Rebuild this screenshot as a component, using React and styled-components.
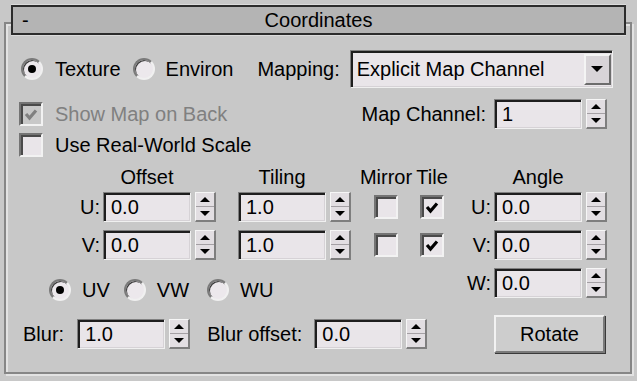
import React from "react";
import styled, { createGlobalStyle } from "styled-components";

const Global = createGlobalStyle`
  html, body { margin: 0; padding: 0; background: #c8c8c8; }
`;

const Root = styled.div`
  width: 637px;
  height: 381px;
  box-sizing: border-box;
  padding: 22px 5px 0 4px;
  background: #c8c8c8;
  font-family: "Liberation Sans", Arial, sans-serif;
  font-size: 20px;
  line-height: 23px;
  color: #000;
  overflow: hidden;
`;

const Frame = styled.div`
  height: 352px;
  box-sizing: border-box;
  border: 2px solid #868686;
  box-shadow: inset 2px 2px 0 #e2e2e2, 2px 2px 0 #e2e2e2;
  display: flex;
  flex-direction: column;
`;

const Header = styled.div`
  margin: -19px 4px 0 5px;
  height: 30px;
  box-sizing: border-box;
  border: 2px solid #2c2c2c;
  box-shadow: 0 -1px 0 #dcdcdc, 0 1px 0 #dcdcdc;
  background: #b4b4b4;
  display: grid;
  grid-template-columns: 1fr auto 1fr;
  align-items: center;
`;

const Minus = styled.span`
  padding-left: 9px;
`;

const Row = styled.div`
  display: flex;
  align-items: center;
  height: ${(p) => p.$h}px;
  margin-top: ${(p) => p.$mt}px;
  padding-left: ${(p) => p.$pl || 0}px;
  padding-right: ${(p) => p.$pr || 0}px;
`;

const Item = styled.label`
  display: flex;
  align-items: center;
  gap: ${(p) => p.$gap || 12}px;
  margin-left: ${(p) => p.$ml || 0}px;
  color: ${(p) => (p.$disabled ? "#808080" : "#000")};
  white-space: nowrap;
`;

const RadioCircle = styled.span`
  width: 22px;
  height: 22px;
  box-sizing: border-box;
  border-radius: 50%;
  border: 2px solid;
  border-color: #7a7a7a #f0f0f0 #f0f0f0 #7a7a7a;
  box-shadow: inset 1px 1px 0 #3c3c3c;
  background: #ece8ec;
  display: flex;
  align-items: center;
  justify-content: center;
  flex-shrink: 0;
  &::after {
    content: "";
    width: 8px;
    height: 8px;
    border-radius: 50%;
    background: ${(p) => (p.$on ? "#000" : "transparent")};
  }
`;

const Box = styled.span`
  width: 24px;
  height: 24px;
  box-sizing: border-box;
  border: 2px solid;
  border-color: #747474 #f2f2f2 #f2f2f2 #747474;
  box-shadow: inset 2px 2px 0 #4a4a4a;
  background: ${(p) => (p.$disabled ? "#c8c8c8" : "#e9e5e9")};
  flex-shrink: 0;
  display: block;
  svg { display: block; }
`;

const Text = styled.span`
  margin-left: ${(p) => (p.$auto ? "auto" : `${p.$ml || 0}px`)};
  white-space: nowrap;
`;

const Field = styled.div`
  width: ${(p) => p.$w || 88}px;
  height: ${(p) => p.$h || 30}px;
  margin-left: ${(p) => p.$ml || 0}px;
  box-sizing: border-box;
  border: 1px solid;
  border-color: #808080 #f0f0f0 #f0f0f0 #808080;
  box-shadow: inset 2px 2px 0 #1e1e1e, inset -1px -1px 0 #d6d2d6;
  background: #e9e5e9;
  padding-left: 7px;
  display: flex;
  align-items: center;
  flex-shrink: 0;
  white-space: nowrap;
`;

const Spin = styled.div`
  width: 21px;
  height: 30px;
  margin-left: 4px;
  box-sizing: border-box;
  flex-shrink: 0;
  display: flex;
  flex-direction: column;
  background: #e2dee2;
  border-top: 1px solid #f6f6f6;
  border-left: 1px solid #f6f6f6;
  border-right: 2px solid #7e7e7e;
  border-bottom: 2px solid #7e7e7e;
`;

const SpinHalf = styled.div`
  flex: 1;
  display: flex;
  align-items: center;
  justify-content: center;
  & + & {
    border-top: 1px solid #a4a0a4;
  }
`;

const Arrow = styled.span`
  width: 0;
  height: 0;
  border-left: ${(p) => p.$s || 5}px solid transparent;
  border-right: ${(p) => p.$s || 5}px solid transparent;
  ${(p) =>
    p.$down
      ? `border-top: ${p.$h || 5}px solid #000;`
      : `border-bottom: ${p.$h || 5}px solid #000;`}
`;

const Dropdown = styled(Field)`
  justify-content: space-between;
  padding-left: 6px;
`;

const DropButton = styled.div`
  width: 27px;
  height: 31px;
  margin-right: 1px;
  box-sizing: border-box;
  background: #d8d4d8;
  border: 2px solid;
  border-color: #f4f4f4 #6c6c6c #6c6c6c #f4f4f4;
  display: flex;
  align-items: center;
  justify-content: center;
`;

const Bottom = styled.div`
  display: flex;
  margin-top: 9px;
`;

const Column = styled.div`
  display: flex;
  flex-direction: column;
`;

const Lbl = styled.span`
  width: ${(p) => p.$w}px;
  box-sizing: border-box;
  padding-right: 3px;
  text-align: right;
  flex-shrink: 0;
`;

const Head = styled.span`
  width: ${(p) => p.$w}px;
  margin-left: ${(p) => p.$ml || 0}px;
  display: flex;
  justify-content: center;
  white-space: nowrap;
  flex-shrink: 0;
`;

const Gap = styled.span`
  width: ${(p) => p.$w}px;
  flex-shrink: 0;
`;

const CheckCell = styled.span`
  margin-left: ${(p) => p.$ml || 0}px;
  display: flex;
`;

const Button = styled.button`
  width: 111px;
  height: 38px;
  margin-left: ${(p) => p.$ml || 0}px;
  box-sizing: border-box;
  background: #cdcdcd;
  border: 2px solid;
  border-color: #f2f2f2 #7a7a7a #7a7a7a #f2f2f2;
  box-shadow: 1px 1px 0 #3a3a3a;
  font: inherit;
  color: #000;
  padding: 0;
`;

const Radio = ({ on, label, ml, gap }) => (
  <Item $ml={ml} $gap={gap}>
    <RadioCircle $on={on} />
    {label}
  </Item>
);

const CheckBox = ({ on, disabled }) => (
  <Box $disabled={disabled}>
    {on && (
      <svg width="20" height="20" viewBox="0 0 20 20">
        <polyline
          points="5,10 8.5,14 15,6.5"
          fill="none"
          stroke={disabled ? "#808080" : "#000"}
          strokeWidth="3.2"
        />
      </svg>
    )}
  </Box>
);

const Check = ({ on, disabled, label, ml }) => (
  <Item $ml={ml} $disabled={disabled}>
    <CheckBox on={on} disabled={disabled} />
    {label}
  </Item>
);

const Spinner = () => (
  <Spin>
    <SpinHalf>
      <Arrow />
    </SpinHalf>
    <SpinHalf>
      <Arrow $down />
    </SpinHalf>
  </Spin>
);

const SpinField = ({ value, ml }) => (
  <>
    <Field $ml={ml}>{value}</Field>
    <Spinner />
  </>
);

export default function App() {
  return (
    <Root>
      <Global />
      <Frame>
        <Header>
          <Minus>-</Minus>
          <span>Coordinates</span>
          <span />
        </Header>

        <Row $h={38} $mt={15} $pl={15}>
          <Radio on label="Texture" />
          <Radio label="Environ" ml={12} gap={11} />
          <Text $ml={24}>Mapping:</Text>
          <Dropdown $w={263} $h={38} $ml={10}>
            Explicit Map Channel
            <DropButton>
              <Arrow $down $s={6} $h={6} />
            </DropButton>
          </Dropdown>
        </Row>

        <Row $h={30} $mt={11} $pl={13} $pr={23}>
          <Check on disabled label="Show Map on Back" />
          <Text $auto>Map Channel:</Text>
          <SpinField value="1" ml={8} />
        </Row>

        <Row $h={24} $mt={4} $pl={13}>
          <Check label="Use Real-World Scale" />
        </Row>

        <Bottom>
          <Column>
            <Row $h={23} $mt={0}>
              <Gap $w={97} />
              <Head $w={88}>Offset</Head>
              <Head $w={88} $ml={47}>Tiling</Head>
              <Head $w={24} $ml={48}>Mirror</Head>
              <Head $w={24} $ml={22}>Tile</Head>
            </Row>
            {["U:", "V:"].map((l, i) => (
              <Row key={l} $h={30} $mt={i === 0 ? 3 : 8}>
                <Lbl $w={97}>{l}</Lbl>
                <SpinField value="0.0" />
                <SpinField value="1.0" ml={22} />
                <CheckCell $ml={23}>
                  <CheckBox />
                </CheckCell>
                <CheckCell $ml={22}>
                  <CheckBox on />
                </CheckCell>
              </Row>
            ))}
            <Row $h={22} $mt={19} $pl={43}>
              <Radio on label="UV" gap={11} />
              <Radio label="VW" ml={14} gap={11} />
              <Radio label="WU" ml={18} gap={11} />
            </Row>
            <Row $h={30} $mt={18} $pl={17}>
              <Text>Blur:</Text>
              <SpinField value="1.0" ml={13} />
              <Text $ml={17}>Blur offset:</Text>
              <SpinField value="0.0" ml={12} />
            </Row>
          </Column>

          <Column>
            <Row $h={23} $mt={0}>
              <Gap $w={50} />
              <Head $w={88}>Angle</Head>
            </Row>
            {["U:", "V:", "W:"].map((l, i) => (
              <Row key={l} $h={30} $mt={i === 0 ? 3 : 8}>
                <Lbl $w={50}>{l}</Lbl>
                <SpinField value="0.0" />
              </Row>
            ))}
            <Row $h={38} $mt={17}>
              <Button $ml={50}>Rotate</Button>
            </Row>
          </Column>
        </Bottom>
      </Frame>
    </Root>
  );
}
